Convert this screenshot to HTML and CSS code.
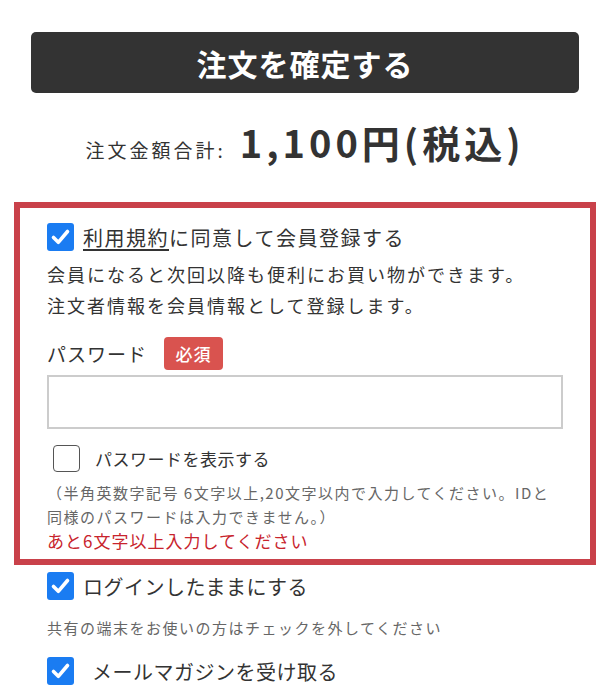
FILE: index.html
```html
<!DOCTYPE html>
<html lang="ja">
<head>
<meta charset="utf-8">
<title>注文確認</title>
<link rel="stylesheet" href="styles.css">
</head>
<body>
<div class="page">
  <button class="confirm" type="button">注文を確定する</button>
  <p class="total"><span class="total-label">注文金額合計:</span><span class="total-amount">1,100円(税込)</span></p>

  <section class="member">
    <label class="check-row row-agree">
      <span class="cb cb-on"><svg viewBox="0 0 27 28" width="27" height="28"><path d="M6.5 14.5 L11.3 19.3 L20.5 8.5" fill="none" stroke="#fff" stroke-width="3.6" stroke-linecap="round" stroke-linejoin="round"/></svg></span>
      <span class="check-label agree-label"><span class="terms">利用規約</span>に同意して会員登録する</span>
    </label>
    <p class="lead">会員になると次回以降も便利にお買い物ができます。<br>注文者情報を会員情報として登録します。</p>
    <div class="field-head">
      <span class="field-label">パスワード</span>
      <span class="badge">必須</span>
    </div>
    <div class="input"></div>
    <label class="check-row row-show">
      <span class="cb cb-off"></span>
      <span class="show-label">パスワードを表示する</span>
    </label>
    <p class="note">（半角英数字記号 6文字以上,20文字以内で入力してください。IDと<br>同様のパスワードは入力できません。）</p>
    <p class="error">あと6文字以上入力してください</p>
  </section>

  <div class="options">
    <label class="check-row row-login">
      <span class="cb cb-on"><svg viewBox="0 0 27 28" width="27" height="28"><path d="M6.5 14.5 L11.3 19.3 L20.5 8.5" fill="none" stroke="#fff" stroke-width="3.6" stroke-linecap="round" stroke-linejoin="round"/></svg></span>
      <span class="check-label">ログインしたままにする</span>
    </label>
    <p class="hint">共有の端末をお使いの方はチェックを外してください</p>
    <label class="check-row row-mail">
      <span class="cb cb-on"><svg viewBox="0 0 27 28" width="27" height="28"><path d="M6.5 14.5 L11.3 19.3 L20.5 8.5" fill="none" stroke="#fff" stroke-width="3.6" stroke-linecap="round" stroke-linejoin="round"/></svg></span>
      <span class="check-label">メールマガジンを受け取る</span>
    </label>
  </div>
</div>
</body>
</html>
```

FILE: styles.css
```css
* { box-sizing: border-box; }
html, body { margin: 0; padding: 0; background: #fff; }
body {
  font-family: "Noto Sans CJK JP", "Noto Sans", sans-serif;
  color: #333;
  width: 610px;
  height: 690px;
  overflow: hidden;
}
p { margin: 0; }

.page {
  padding: 32px 14px 0;
}

.confirm {
  display: block;
  width: 548px;
  height: 61px;
  margin: 0 0 0 17px;
  border: none;
  border-radius: 5px;
  background: #333;
  color: #fff;
  font-family: inherit;
  font-size: 30px;
  font-weight: 700;
  letter-spacing: 1px;
  padding: 0;
}

.total {
  display: flex;
  justify-content: center;
  align-items: baseline;
  height: 44px;
  margin-top: 27px;
  line-height: 44px;
}
.total-label {
  font-size: 19px;
  letter-spacing: 3px;
  margin-right: 14px;
}
.total-amount {
  font-size: 38px;
  font-weight: 700;
  letter-spacing: 4px;
}

.member {
  margin-top: 38px;
  border: 6px solid #c9414a;
  padding: 15px 27px 6px;
}

.check-row {
  display: flex;
  align-items: center;
  height: 28px;
}
.cb {
  flex: none;
  display: block;
  width: 27px;
  height: 28px;
  border-radius: 3px;
}
.cb svg { display: block; }
.cb-on { background: #1a7cf2; }
.cb-off {
  width: 27px;
  height: 27px;
  margin-left: 6px;
  border: 1.5px solid #555;
  border-radius: 4px;
}

.check-label {
  margin-left: 9px;
  font-size: 20px;
  letter-spacing: 0.5px;
  color: #333;
}
.agree-label { letter-spacing: 1.5px; }
.terms { text-decoration: underline; text-underline-offset: 3px; }

.lead {
  margin-top: 8px;
  font-size: 18px;
  line-height: 31px;
  letter-spacing: 2px;
  color: #333;
}

.field-head {
  display: flex;
  align-items: center;
  margin-top: 16px;
  height: 33px;
}
.field-label {
  font-size: 19px;
  letter-spacing: 1px;
}
.badge {
  margin-left: 17px;
  width: 59px;
  height: 33px;
  border-radius: 4px;
  background: #d9534f;
  color: #fff;
  font-size: 17px;
  font-weight: 500;
  letter-spacing: 1px;
  display: flex;
  align-items: center;
  justify-content: center;
}

.input {
  margin-top: 5px;
  height: 54px;
  border: 2px solid #ccc;
  background: #fff;
}

.row-show {
  margin-top: 16px;
  height: 27px;
}
.show-label {
  margin-left: 15px;
  font-size: 17px;
  letter-spacing: 0.5px;
}

.note {
  margin-top: 9px;
  font-size: 15px;
  line-height: 24px;
  letter-spacing: 1.5px;
  color: #666;
}
.error {
  margin-top: 0;
  font-size: 17px;
  line-height: 24px;
  letter-spacing: 1px;
  color: #c8242d;
}

.options {
  padding: 7px 33px 0;
}
.hint {
  margin-top: 17px;
  font-size: 15px;
  line-height: 22px;
  letter-spacing: 1.5px;
  color: #666;
}
.row-mail {
  margin-top: 18px;
}
.row-mail .check-label {
  margin-left: 18px;
}
```
